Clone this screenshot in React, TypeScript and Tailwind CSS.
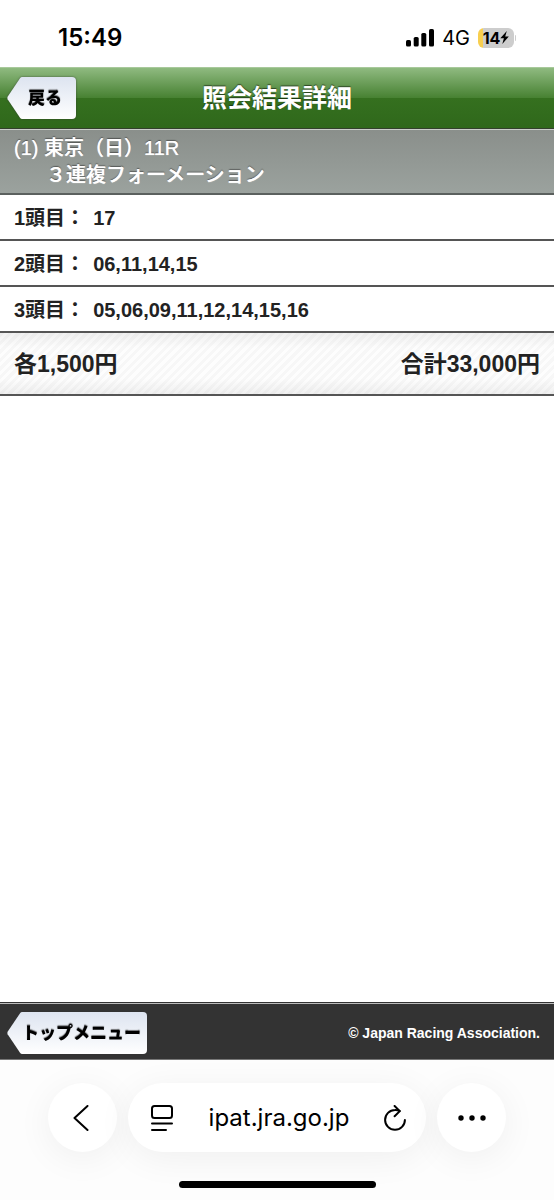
import React from "react";

const betRows = [
  { id: 1, label: "1頭目：", numbers: "17" },
  { id: 2, label: "2頭目：", numbers: "06,11,14,15" },
  { id: 3, label: "3頭目：", numbers: "05,06,09,11,12,14,15,16" },
];

const StatusBar = () => (
  <div className="flex h-[67px] items-center justify-between pt-2 pr-[38px] pl-[58px] font-['Inter',sans-serif] text-black">
    <span className="text-2xl font-semibold">15:49</span>
    <div className="flex items-center gap-2">
      <svg viewBox="0 0 28 18" className="h-[18px] w-7" aria-hidden="true">
        <rect x="0" y="11" width="5" height="6.5" rx="1.6" />
        <rect x="7.7" y="8" width="5" height="9.5" rx="1.6" />
        <rect x="15.3" y="4" width="5" height="13.5" rx="1.6" />
        <rect x="23" y="0" width="5" height="17.5" rx="1.6" />
      </svg>
      <span className="text-xl">4G</span>
      <div className="flex items-center gap-px">
        <div className="flex h-5 w-9 items-center justify-center rounded-md bg-linear-to-r from-[#f8cf50] from-14% to-[#cdcdcd] to-14% text-base font-bold">
          14
          <svg viewBox="0 0 9 13" className="h-[13px] w-[9px]" aria-hidden="true">
            <path d="M6.8 0 0.3 7.3h3.6L2.3 13 8.8 5.6H5.2z" />
          </svg>
        </div>
        <span className="h-1.5 w-px rounded-r bg-[#cdcdcd]" />
      </div>
    </div>
  </div>
);

const ArrowButton: React.FC<{ children: React.ReactNode; className: string }> = ({ children, className }) => (
  <button type="button" className="flex h-[42px] text-[17px] font-black text-black drop-shadow-[0_0_1px_#333a]">
    <svg viewBox="0 0 15 42" preserveAspectRatio="none" className="h-[42px] w-[15px]" aria-hidden="true">
      <defs>
        <linearGradient id="tip" x1="0" y1="0" x2="0" y2="1">
          <stop offset="0" stopColor="#dde4f0" />
          <stop offset="1" stopColor="#ffffff" />
        </linearGradient>
      </defs>
      <path d="M15 0Q14 0 13.2 1.1L0.6 19.8Q0 21 0.6 22.2L13.2 40.9Q14 42 15 42Z" fill="url(#tip)" />
    </svg>
    <span
      className={`flex h-full items-center rounded-r bg-linear-to-b from-[#dde4f0] to-white pt-0.5 [text-shadow:0_-1px_1px_#0008] ${className}`}
    >
      {children}
    </span>
  </button>
);

const BrowserBar = () => (
  <div className="flex h-[140px] flex-col items-center justify-between overflow-hidden bg-[#fdfdfd] pt-[23px] pb-3 text-black">
    <div className="flex w-full gap-[11px] px-12">
      <button
        type="button"
        aria-label="戻る"
        className="flex size-[69px] shrink-0 items-center justify-center rounded-full bg-white shadow-[0_6px_36px_#0000000f]"
      >
        <svg viewBox="0 0 16 26" className="mr-1 h-[26px] w-4" fill="none" stroke="currentColor" strokeWidth="2" strokeLinecap="round" strokeLinejoin="round">
          <path d="M14.5 1 1.5 13l13 12" />
        </svg>
      </button>
      <div className="flex h-[69px] flex-1 items-center justify-between rounded-full bg-white px-5 pl-[22px] shadow-[0_6px_36px_#0000000f]">
        <button type="button" aria-label="ページメニュー">
          <svg viewBox="0 0 24 28" className="h-7 w-6" fill="none" stroke="currentColor" strokeWidth="2" strokeLinecap="round">
            <rect x="2" y="2" width="20" height="12" rx="2.5" />
            <path d="M2 19.5h20M2 26h14" />
          </svg>
        </button>
        <span className="font-['Inter',sans-serif] text-2xl">ipat.jra.go.jp</span>
        <button type="button" aria-label="再読み込み">
          <svg viewBox="0 0 22 26" className="h-[26px] w-[22px]" fill="none" stroke="currentColor" strokeWidth="2" strokeLinecap="round" strokeLinejoin="round">
            <path d="M20.9 14.9A9.9 9.9 0 1 1 11 5Q13.2 4.9 15.6 6" />
            <path d="M10.6 1l5.2 5.1-5.2 5.2" />
          </svg>
        </button>
      </div>
      <button
        type="button"
        aria-label="その他"
        className="flex size-[69px] shrink-0 items-center justify-center rounded-full bg-white shadow-[0_6px_36px_#0000000f]"
      >
        <svg viewBox="0 0 28 6" className="h-1.5 w-7">
          <circle cx="3" cy="3" r="2.7" />
          <circle cx="14" cy="3" r="2.7" />
          <circle cx="25" cy="3" r="2.7" />
        </svg>
      </button>
    </div>
    <div className="h-[7px] w-[197px] rounded-full bg-black" />
  </div>
);

const App = () => {
  return (
    <div lang="ja" className="flex min-h-screen flex-col bg-white font-['Liberation_Sans','Noto_Sans_CJK_JP',sans-serif] text-[#222]">
      <StatusBar />

      <header className="grid h-[62px] grid-cols-[1fr_auto_1fr] items-center border-t border-b border-t-[#a8c99b] border-b-[#33402c] bg-[linear-gradient(#8fba80,#478132_50%,#35701f_50%,#2f681b)] px-[7px]">
        <div className="flex">
          <ArrowButton className="pr-[14px] pl-1.5">戻る</ArrowButton>
        </div>
        <h1 className="text-[25px] leading-9 font-bold text-white [text-shadow:0_-1px_1px_#0008]">照会結果詳細</h1>
      </header>

      <main className="flex-1">
        <h2 className="border-t border-b-2 border-t-[#c9cdca] border-b-[#5b605e] bg-linear-to-b from-[#8a8f8b] to-[#9ba29e] px-[14px] pt-[5px] pb-1 text-xl leading-[27px] font-medium text-white [text-shadow:0_0_1px_#fff,0_-1px_1px_#0008]">
          (1) 東京（日）11R
          <span className="block pl-8">３連複フォーメーション</span>
        </h2>

        <dl>
          {betRows.map((row) => (
            <div key={row.id} className="flex gap-2 border-b-2 border-[#555] px-[14px] pt-[9px] pb-[7px] text-xl leading-7 font-bold">
              <dt>{row.label}</dt>
              <dd>{row.numbers}</dd>
            </div>
          ))}
        </dl>

        <div className="flex justify-between border-b-2 border-[#555] bg-[linear-gradient(#0000000d,transparent_25%,transparent_75%,#0000000d),repeating-linear-gradient(135deg,#f7f7f7_0_3px,#fdfdfd_3px_6px)] px-[14px] pt-[15px] pb-[14px] text-[23px] leading-8 font-bold">
          <span>各1,500円</span>
          <span>合計33,000円</span>
        </div>
      </main>

      <footer className="border-t border-b border-t-[#333] border-b-[#777] text-white">
        <div className="flex h-14 items-center justify-between border-t border-[#bbb] bg-[#333] pt-0.5 pr-[14px] pl-[7px]">
          <ArrowButton className="pr-1.5 pl-0">トップメニュー</ArrowButton>
          <small className="text-sm font-bold">© Japan Racing Association.</small>
        </div>
      </footer>

      <BrowserBar />
    </div>
  );
};

export default App;
